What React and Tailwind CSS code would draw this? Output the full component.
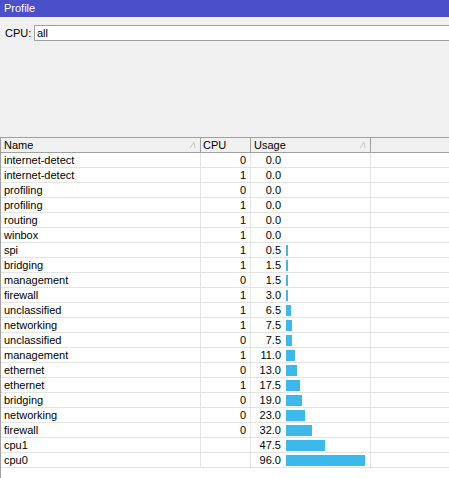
import React from 'react'

const rows = [
  ['internet-detect', '0', '0.0'],
  ['internet-detect', '1', '0.0'],
  ['profiling', '0', '0.0'],
  ['profiling', '1', '0.0'],
  ['routing', '1', '0.0'],
  ['winbox', '1', '0.0'],
  ['spi', '1', '0.5'],
  ['bridging', '1', '1.5'],
  ['management', '0', '1.5'],
  ['firewall', '1', '3.0'],
  ['unclassified', '1', '6.5'],
  ['networking', '1', '7.5'],
  ['unclassified', '0', '7.5'],
  ['management', '1', '11.0'],
  ['ethernet', '0', '13.0'],
  ['ethernet', '1', '17.5'],
  ['bridging', '0', '19.0'],
  ['networking', '0', '23.0'],
  ['firewall', '0', '32.0'],
  ['cpu1', '', '47.5'],
  ['cpu0', '', '96.0']
]

const SortMark = () => (
  <svg width="7" height="8" viewBox="0 0 7 8" className="ml-auto mr-1">
    <path d="M1 7 L5 1 L6 7" fill="none" stroke="#c8c8c8" strokeWidth="1" />
  </svg>
)

const App = () => {
  return (
    <div
      className="w-[449px] h-[478px] bg-[#f0f0f0] text-[11px] text-black flex flex-col overflow-hidden"
      style={{ fontFamily: '"Liberation Sans", Arial, sans-serif' }}
    >
      <div className="h-[17px] bg-[#4b4fc9] text-white px-1 flex items-center leading-none">
        Profile
      </div>

      <div className="flex items-center mt-[8px] h-[16px]">
        <span className="ml-[5px] w-[29px]">CPU:</span>
        <div className="flex-1 h-[16px] bg-white border-y border-l border-[#a0a0a0] flex items-center px-[2px] leading-none">
          all
        </div>
      </div>

      <div className="mt-[96px] flex-1 border-l border-[#a0a0a0] flex flex-col">
        <div className="flex h-[16px] border-y border-[#a0a0a0] leading-none">
          <div className="w-[200px] flex items-center pl-[3px] border-r border-[#a0a0a0]">
            Name
            <SortMark />
          </div>
          <div className="w-[50px] flex items-center pl-[2px] border-r border-[#a0a0a0]">CPU</div>
          <div className="w-[120px] flex items-center pl-[3px] border-r border-[#a0a0a0]">
            Usage
            <SortMark />
          </div>
          <div className="flex-1"></div>
        </div>

        <div className="bg-white flex-1 flex flex-col">
          {rows.map((r, i) => {
            const v = parseFloat(r[2])
            const w = v > 0 ? Math.max(Math.round(v * 0.82), 2) : 0
            return (
              <div key={i} className="flex h-[15px] border-b border-[#e3e3e3] leading-none">
                <div className="w-[200px] flex items-center pl-[3px] border-r border-[#e3e3e3]">{r[0]}</div>
                <div className="w-[50px] flex items-center justify-end pr-[4px] border-r border-[#e3e3e3]">{r[1]}</div>
                <div className="w-[120px] flex items-center border-r border-[#e3e3e3]">
                  <span className="w-[30px] text-right">{r[2]}</span>
                  {w > 0 && (
                    <span className="ml-[5px] h-[11px] bg-[#3db8ea]" style={{ width: w }} />
                  )}
                </div>
                <div className="flex-1"></div>
              </div>
            )
          })}
        </div>
      </div>
    </div>
  )
}

export default App
